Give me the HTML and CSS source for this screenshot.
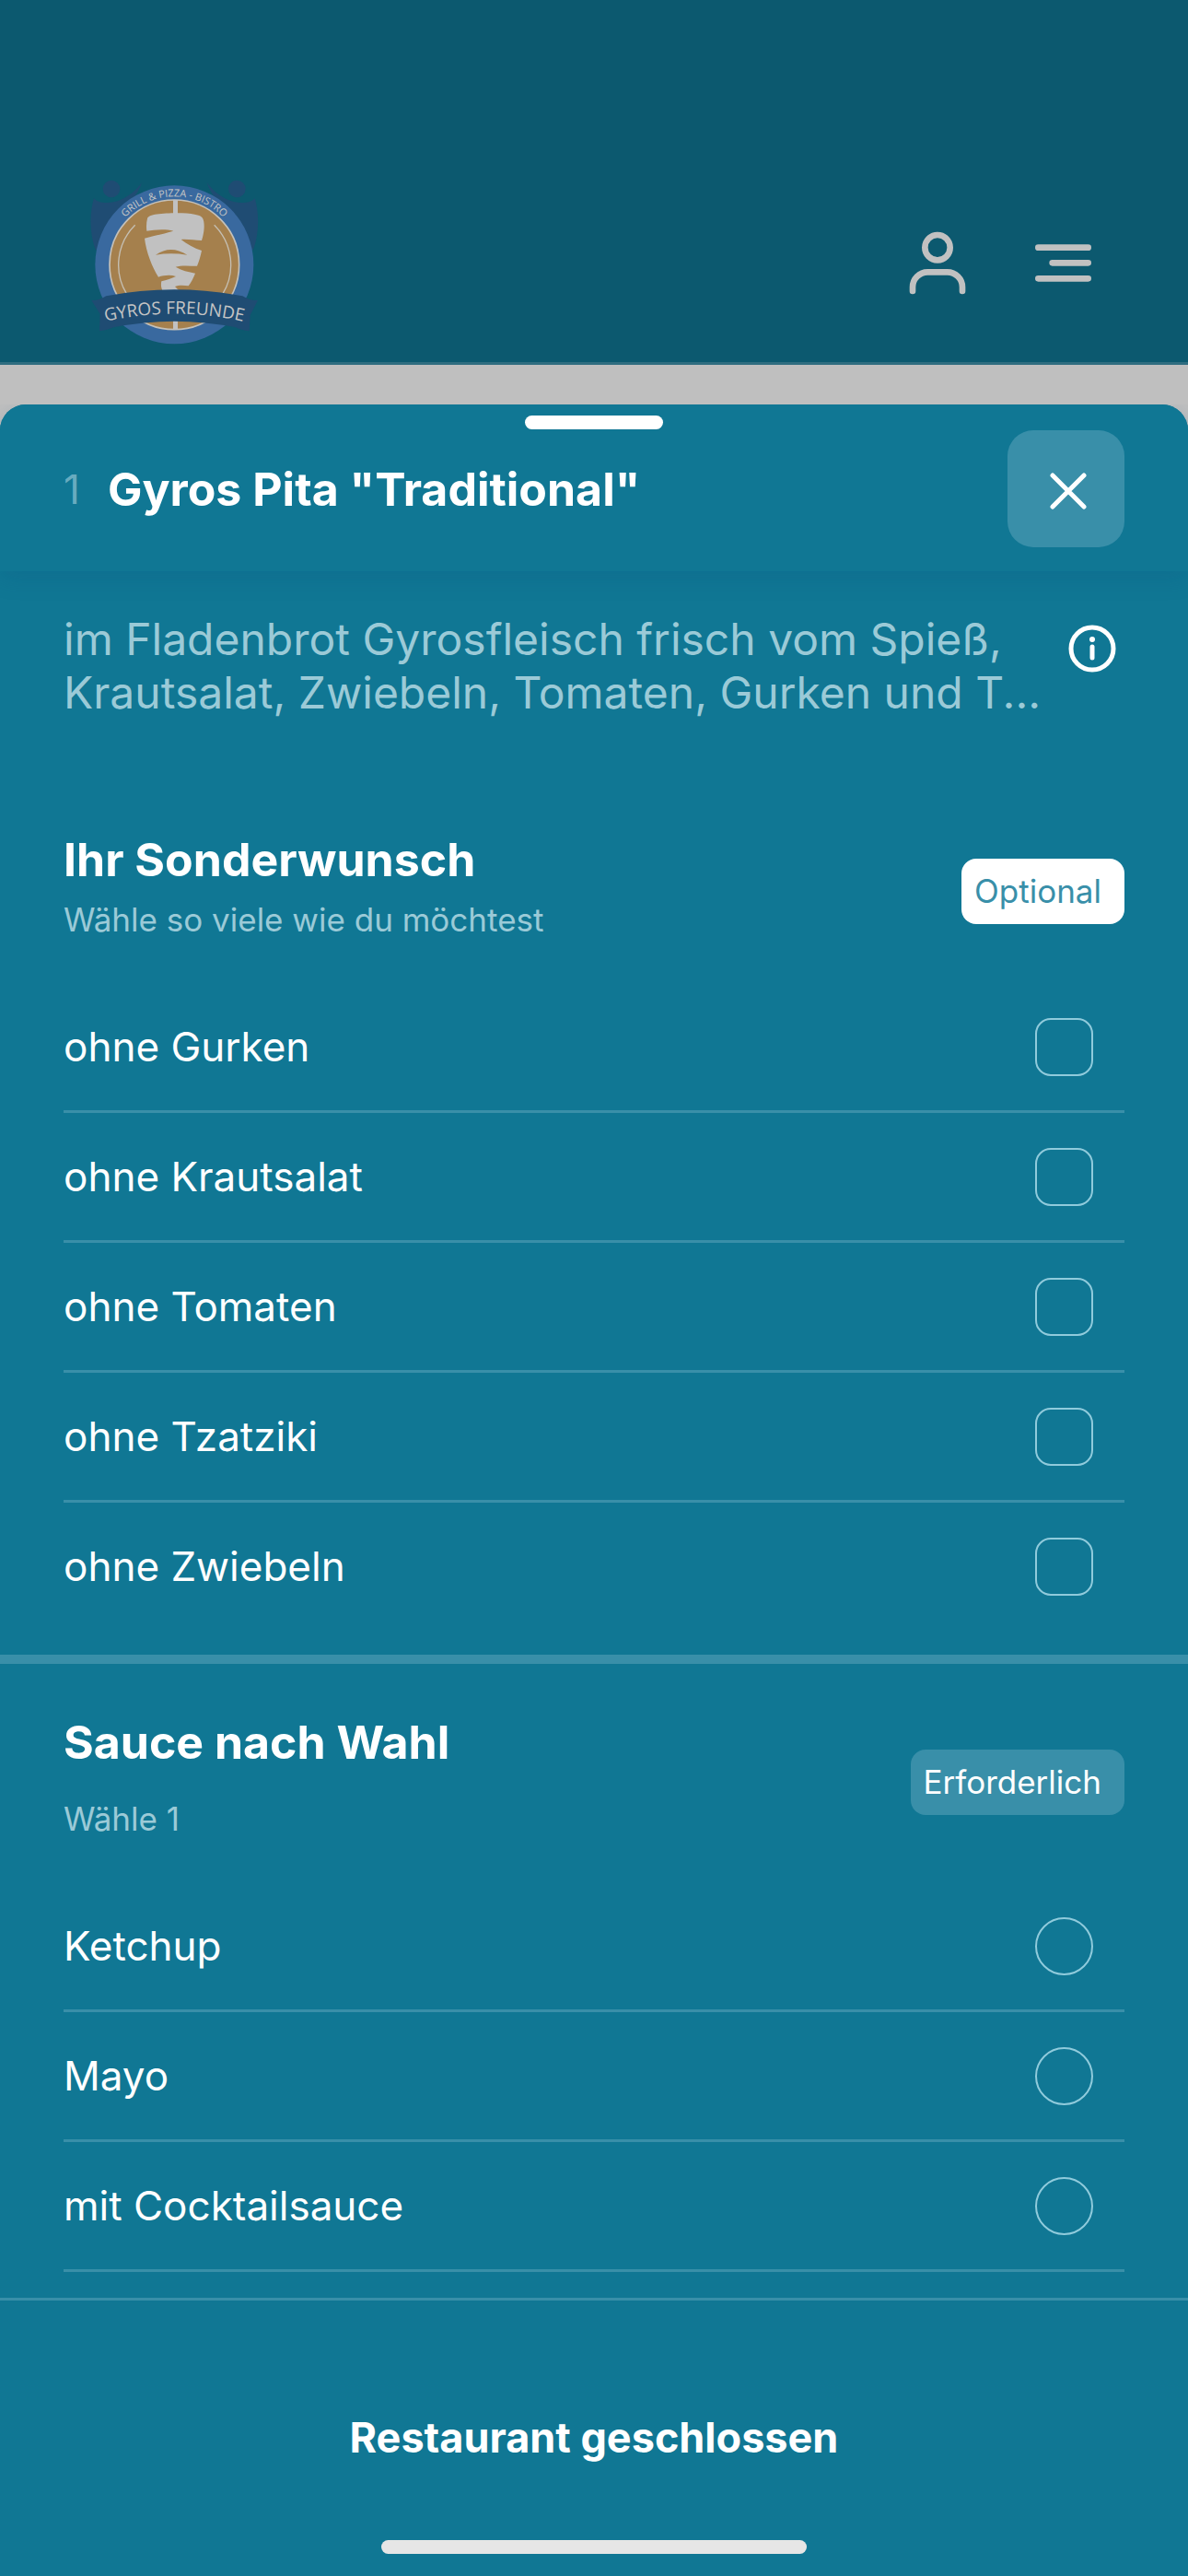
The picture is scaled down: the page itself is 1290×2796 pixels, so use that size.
FILE: index.html
```html
<!DOCTYPE html>
<html lang="de">
<head>
<meta charset="utf-8">
<meta name="viewport" content="width=device-width, initial-scale=1">
<title>Gyros Freunde</title>
<link rel="stylesheet" href="styles.css">
</head>
<body>
<header class="site-header">
  <a class="logo" href="#" aria-label="Gyros Freunde">
    <svg width="220" height="210" viewBox="0 0 660 630">
      <defs>
        <path id="arc-top" d="M106 322A222 222 0 0 1 550 322"/>
        <path id="arc-name" d="M80 512Q328 452 576 512"/>
      </defs>
      <g fill="#1f4c73">
        <circle cx="123" cy="75" r="28"/>
        <circle cx="532" cy="75" r="28"/>
        <path d="M66 106C82 124 120 124 150 112C184 98 206 76 222 54C212 84 196 106 180 128L72 275C50 220 52 150 66 106Z"/>
        <path d="M590 106C574 124 536 124 506 112C472 98 450 76 434 54C444 84 460 106 476 128L584 275C606 220 604 150 590 106Z"/>
      </g>
      <circle cx="328" cy="322" r="258" fill="#39699f"/>
      <circle cx="328" cy="322" r="211" fill="#a5804d" stroke="#c5c1b9" stroke-width="5"/>
      <path d="M200 193A182 182 0 0 0 172 416M458 193A182 182 0 0 1 486 416" fill="none" stroke="#c5bfb3" stroke-width="4"/>
      <path d="M324 111h15v50h-15zM324 500h15v32h-15z" fill="#c1c1c1"/>
      <path fill="#c1c1c1" d="M240 172C242 158 290 154 335 154C385 154 414 160 420 170C428 185 426 215 417 243C395 243 370 238 350 240C368 254 392 268 417 276C413 296 408 312 402 326C378 326 350 323 332 329C350 340 375 346 396 350C390 366 382 380 374 391C358 388 340 388 330 393L345 408H290C284 396 284 384 286 376C302 372 320 366 333 360C315 354 294 356 276 362C256 330 236 280 231 236C262 228 298 220 325 212C298 204 262 208 238 212C236 198 237 184 240 172Z"/>
      <path fill="#a5804d" d="M267 290Q316 256 370 290Q316 282 267 290Z"/>
      <path fill="#1f4c73" d="M58 438Q80 440 106 424Q328 382 550 424Q576 440 600 438L575 486L572 538Q545 535 528 526Q328 486 130 526Q110 535 84 538L86 482Z"/>
      <text class="logo-name" text-anchor="middle"><textPath href="#arc-name" startOffset="50%">GYROS FREUNDE</textPath></text>
      <text class="logo-tag" text-anchor="middle"><textPath href="#arc-top" startOffset="50%">GRILL &amp; PIZZA - BISTRO</textPath></text>
    </svg>
  </a>
  <nav class="header-actions">
    <button class="icon-button" type="button" aria-label="Konto">
      <svg width="62" height="69" viewBox="83 60 186 207" fill="none" stroke="#c1c1c1" stroke-width="20" stroke-linecap="round">
        <circle cx="176" cy="113" r="41"/>
        <path d="M95 255V242A49 49 0 0 1 144 193H208A49 49 0 0 1 257 242V255"/>
      </svg>
    </button>
    <button class="icon-button" type="button" aria-label="Menü">
      <svg width="61" height="69" viewBox="492 60 183 207" fill="none" stroke="#c1c1c1" stroke-width="20" stroke-linecap="round">
        <path d="M502 113H665M548 163H665M502 214H665"/>
      </svg>
    </button>
  </nav>
</header>

<main class="sheet">
  <div class="sheet-header">
    <div class="handle"></div>
    <div class="sheet-title-row">
      <span class="item-number">1</span>
      <h1 class="sheet-title">Gyros Pita "Traditional"</h1>
      <button class="close-button" type="button" aria-label="Schließen">
        <svg width="40" height="40" viewBox="0 0 40 40" fill="none" stroke="#fff" stroke-width="5" stroke-linecap="round">
          <path d="M3 3L37 37M37 3L3 37"/>
        </svg>
      </button>
    </div>
  </div>

  <div class="sheet-body">
    <div class="description">
      <p class="description-text">im Fladenbrot Gyrosfleisch frisch vom Spieß, Krautsalat, Zwiebeln, Tomaten, Gurken und T...</p>
      <button class="icon-button info-button" type="button" aria-label="Produktinformationen">
        <svg width="52" height="52" viewBox="0 0 52 52">
          <circle cx="26" cy="26" r="23" fill="none" stroke="#fff" stroke-width="5"/>
          <circle cx="26" cy="16" r="3" fill="#fff"/>
          <path d="M26 24V36" stroke="#fff" stroke-width="5" stroke-linecap="round"/>
        </svg>
      </button>
    </div>

    <section class="group">
      <div class="group-header">
        <div class="group-heading">
          <h2 class="group-title">Ihr Sonderwunsch</h2>
          <p class="group-hint">Wähle so viele wie du möchtest</p>
        </div>
        <span class="badge badge-optional">Optional</span>
      </div>
      <div class="options">
        <label class="option">ohne Gurken<input class="choice" type="checkbox" name="wunsch"></label>
        <label class="option">ohne Krautsalat<input class="choice" type="checkbox" name="wunsch"></label>
        <label class="option">ohne Tomaten<input class="choice" type="checkbox" name="wunsch"></label>
        <label class="option">ohne Tzatziki<input class="choice" type="checkbox" name="wunsch"></label>
        <label class="option option-last">ohne Zwiebeln<input class="choice" type="checkbox" name="wunsch"></label>
      </div>
    </section>

    <section class="group group-divided">
      <div class="group-header">
        <div class="group-heading group-heading-wide">
          <h2 class="group-title">Sauce nach Wahl</h2>
          <p class="group-hint">Wähle 1</p>
        </div>
        <span class="badge">Erforderlich</span>
      </div>
      <div class="options">
        <label class="option">Ketchup<input class="choice choice-radio" type="radio" name="sauce"></label>
        <label class="option">Mayo<input class="choice choice-radio" type="radio" name="sauce"></label>
        <label class="option">mit Cocktailsauce<input class="choice choice-radio" type="radio" name="sauce"></label>
      </div>
    </section>
  </div>

  <footer class="sheet-footer">
    <button class="order-button" type="button">Restaurant geschlossen</button>
    <div class="home-indicator"></div>
  </footer>
</main>
</body>
</html>
```

FILE: styles.css
```css
:root {
  --teal: #107794;
  --teal-dark: #0c596f;
  --teal-light: #398fa9;
  --muted: #9bcad7;
  --outline: #90cbdc;
  --gutter: 69px;
}

* {
  box-sizing: border-box;
}

body {
  margin: 0;
  min-height: 100vh;
  display: flex;
  flex-direction: column;
  gap: 43px;
  background: #bfbfbf;
  color: #fff;
  font-family: Inter, "Liberation Sans", sans-serif;
}

h1, h2, p {
  margin: 0;
}

button {
  border: 0;
  padding: 0;
  background: none;
  color: inherit;
  font-family: inherit;
}

svg {
  display: block;
}

.site-header {
  display: flex;
  justify-content: space-between;
  align-items: center;
  padding: 180px 105px 3px 80px;
  border-bottom: 3px solid #2f6d80;
  background: var(--teal-dark);
}

.logo-name,
.logo-tag {
  font-family: "Open Sans", "Noto Sans", sans-serif;
  fill: #c5c5c5;
}

.logo-name {
  font-size: 57px;
}

.logo-tag {
  font-size: 33px;
}

.header-actions {
  display: flex;
  gap: 75px;
}

.sheet {
  flex: 1;
  display: flex;
  flex-direction: column;
  border-radius: 28px 28px 0 0;
  background: var(--teal);
}

.sheet-header {
  position: relative;
  padding: 12px var(--gutter) 26px;
  border-radius: 28px 28px 0 0;
  background: var(--teal);
  box-shadow: 0 8px 24px rgba(10, 80, 130, 0.2);
  clip-path: inset(0 0 -40px 0);
}

.handle {
  width: 150px;
  height: 15px;
  margin: 0 auto 1px;
  border-radius: 8px;
  background: #fff;
}

.sheet-title-row {
  display: flex;
  align-items: center;
  gap: 30px;
}

.item-number {
  color: #68abbf;
  font-size: 44px;
}

.sheet-title {
  flex: 1;
  font-size: 50px;
  font-weight: 700;
  line-height: 60px;
}

.close-button {
  display: grid;
  place-items: center;
  width: 127px;
  height: 127px;
  padding: 4px 0 0 4px;
  border-radius: 28px;
  background: var(--teal-light);
}

.sheet-body {
  flex: 1;
}

.description {
  display: flex;
  align-items: flex-start;
  gap: 12px;
  padding: 45px 78px 67px var(--gutter);
}

.description-text {
  flex: 1;
  color: var(--muted);
  font-size: 48px;
  line-height: 58px;
}

.info-button {
  margin-top: 13px;
}

.group {
  padding: 55px var(--gutter) 24px;
}

.group-divided {
  border-top: 10px solid var(--teal-light);
}

.group-header {
  display: flex;
  justify-content: space-between;
  align-items: center;
}

.group-heading {
  display: grid;
  gap: 11px;
  padding-bottom: 10px;
}

.group-heading-wide {
  gap: 29px;
}

.group-title {
  font-size: 50px;
  font-weight: 700;
  line-height: 60px;
}

.group-hint {
  color: var(--muted);
  font-size: 35px;
  line-height: 48px;
}

.badge {
  padding: 0 25px 0 14px;
  border-radius: 16px;
  background: var(--teal-light);
  font-size: 35px;
  line-height: 71px;
}

.badge-optional {
  background: #fff;
  color: var(--teal-light);
}

.options {
  padding-top: 35px;
}

.option {
  display: flex;
  justify-content: space-between;
  align-items: center;
  height: 141px;
  padding-right: 34px;
  border-bottom: 3px solid var(--teal-light);
  font-size: 44px;
}

.option-last {
  border-bottom-color: transparent;
}

.choice {
  appearance: none;
  width: 63px;
  height: 63px;
  margin: 0;
  border: 2px solid var(--outline);
  border-radius: 17px;
}

.choice:checked {
  background: var(--outline);
}

.choice-radio {
  border-radius: 50%;
}

.sheet-footer {
  display: flex;
  flex-direction: column;
  align-items: center;
  gap: 48px;
  padding: 84px var(--gutter) 24px;
  border-top: 3px solid var(--teal-light);
}

.order-button {
  width: 100%;
  height: 128px;
  font-size: 45px;
  font-weight: 700;
}

.home-indicator {
  width: 462px;
  height: 15px;
  border-radius: 8px;
  background: #e6e6e6;
}
```
